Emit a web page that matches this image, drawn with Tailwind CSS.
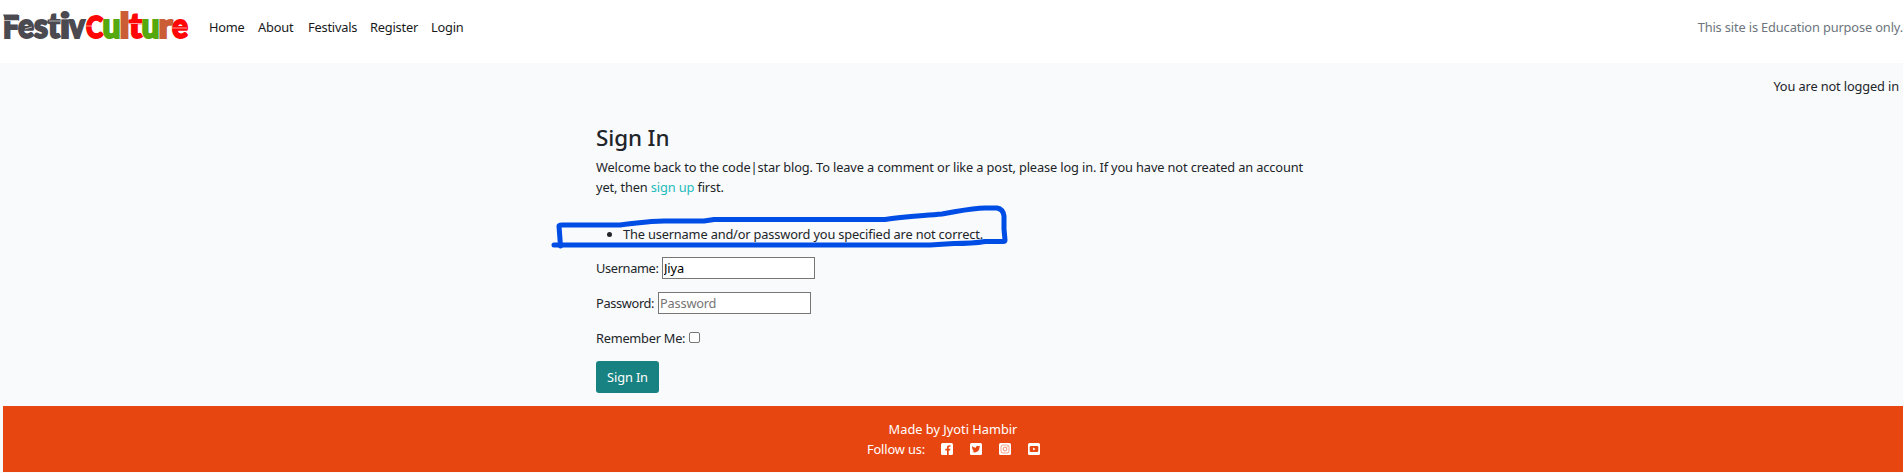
<!DOCTYPE html>
<html lang="en">
<head>
<meta charset="utf-8">
<title>FestivCulture</title>
<script src="https://cdn.jsdelivr.net/npm/@tailwindcss/browser@4"></script>
</head>
<body class="h-[473px] overflow-hidden bg-[#f9fafc] font-['Noto_Sans','Open_Sans',sans-serif] text-[12.8px] leading-5 tracking-[-0.13px] text-[#212529]">
<header class="flex h-[63px] items-start bg-white pt-[9px]">
  <a class="ml-[3px] block h-[36px] w-[186px] shrink-0">
    <svg class="block overflow-visible" width="186" height="36" viewBox="3 8 186 36" font-family="Lato, sans-serif" font-weight="900" font-size="34" letter-spacing="0" stroke-width="2">
      <g fill="#4b4a50" stroke="#4b4a50">
        <text x="3" y="37" font-size="31" textLength="16" lengthAdjust="spacingAndGlyphs">F</text>
        <text x="18" y="37" textLength="16" lengthAdjust="spacingAndGlyphs">e</text>
        <text x="34" y="37" textLength="14" lengthAdjust="spacingAndGlyphs">s</text>
        <text x="48" y="37" textLength="12" lengthAdjust="spacingAndGlyphs">t</text>
        <text x="60" y="37" textLength="10" lengthAdjust="spacingAndGlyphs">i</text>
        <text x="69" y="37" textLength="16" lengthAdjust="spacingAndGlyphs">v</text>
        <path d="M3 13.500H18L17 18H5Z" stroke="none"/>
      </g>
      <g fill="#ff0505" stroke="#ff0505">
        <text x="86" y="37" font-size="31" textLength="17" lengthAdjust="spacingAndGlyphs">C</text>
        <text x="129" y="37" textLength="13" lengthAdjust="spacingAndGlyphs">t</text>
        <text x="172" y="37" textLength="16" lengthAdjust="spacingAndGlyphs">e</text>
      </g>
      <g fill="#56a80f" stroke="#56a80f">
        <text x="102.500" y="37" textLength="18" lengthAdjust="spacingAndGlyphs">u</text>
        <text x="141.500" y="37" textLength="18" lengthAdjust="spacingAndGlyphs">u</text>
      </g>
      <g fill="#cb5d36" stroke="#cb5d36">
        <text x="119.500" y="37" textLength="10" lengthAdjust="spacingAndGlyphs">l</text>
        <text x="158.500" y="37" textLength="14" lengthAdjust="spacingAndGlyphs">r</text>
      </g>
      <path d="M4 19.500H18M49 20H60M61 18H69M86 25H97M129 22.500H142M25 28L32 26M172 27H187" fill="none" stroke="#fff" stroke-opacity=".75" stroke-width=".8"/>
    </svg>
  </a>
  <nav class="ml-[20px] mt-[8px] flex gap-[14px] tracking-[-0.2px] text-[#181a1c]">
    <a class="w-[35px] whitespace-nowrap">Home</a><a class="w-[36px] whitespace-nowrap">About</a><a class="w-[48px] whitespace-nowrap">Festivals</a><a class="w-[47px] whitespace-nowrap">Register</a><a class="whitespace-nowrap">Login</a>
  </nav>
  <span class="ml-auto mt-[8px] whitespace-nowrap text-[#6c757d]">This site is Education purpose only.</span>
</header>
<main>
  <p class="mt-[13px] h-5 pr-[4px] text-right">You are not logged in</p>
  <section class="ml-[596px] w-[720px] pt-[29px]">
    <h1 class="h-[26px] text-[22.4px] font-medium leading-[26px] tracking-[-0.1px]">Sign In</h1>
    <p class="mt-[6px] whitespace-nowrap">Welcome back to the code|star blog. To leave a comment or like a post, please log in. If you have not created an account<br>yet, then <a class="text-[#23bbbb]">sign up</a> first.</p>
    <div class="relative mt-[27px] h-5">
      <ul class="list-disc pl-[27px] tracking-[-0.16px]"><li>The username and/or password you specified are not correct.</li></ul>
      <svg class="absolute -left-[46px] -top-[24px]" width="460" height="56" viewBox="550 200 460 56" fill="none" stroke="#004de6" stroke-width="5" stroke-linecap="round" stroke-linejoin="round"><path d="M560.500 246L559 226Q559 225 562 225H620C640 223 647 221 664 221H704L714 219.500H885C902 217 920 216 942 214C965 210 973 208 985 208H997Q1003 209 1004 216V229L1005 240Q1005 241.500 1003 241.500H985C976 243 971 243.500 954 243.500L930 245H554"/></svg>
    </div>
    <form>
      <div class="mt-[13px] flex h-[22px] items-center"><label class="w-[66px] whitespace-nowrap tracking-[-0.35px]">Username:</label><input type="text" value="Jiya" class="h-[22px] w-[153px] border border-[#767676] bg-white px-px text-black"></div>
      <div class="mt-[13px] flex h-[22px] items-center"><label class="w-[62px] whitespace-nowrap tracking-[-0.35px]">Password:</label><input type="password" placeholder="Password" class="h-[22px] w-[153px] border border-[#767676] bg-white px-px tracking-[-0.2px] placeholder:text-[#757575]"></div>
      <div class="mt-[13px] flex h-[22px] items-center"><label class="w-[93px] whitespace-nowrap tracking-[-0.25px]">Remember Me:</label><input type="checkbox" class="-mt-px size-[11px] appearance-none rounded-[2px] border border-[#767676] bg-white"></div>
      <button type="button" class="mt-[12px] block h-[32px] w-[63px] rounded-[3px] bg-[#188181] text-center text-white">Sign In</button>
    </form>
  </section>
</main>
<footer class="ml-[3px] mt-[13px] h-[66px] bg-[#e84610] pt-[13px] text-center text-white">
  <p class="tracking-normal">Made by Jyoti Hambir</p>
  <div class="ml-[864px] flex h-5 items-center">
    <span class="w-[74px] whitespace-nowrap text-left">Follow us:</span>
    <span class="flex gap-[17px]">
    <svg width="12" height="12" viewBox="0 0 12 12"><rect width="12" height="12" rx="1.500" fill="#fff"/><path d="M6 12V7.500H4.300V5.800H6V4.500C6 2.800 7 2 9.500 2.300V3.800C8 3.700 7.700 4 7.700 4.800V5.800H9.400L9.100 7.500H7.700V12Z" fill="#e84610"/></svg>
    <svg width="12" height="12" viewBox="0 0 12 12"><rect width="12" height="12" rx="1.500" fill="#fff"/><path d="M2.300 3C3.200 4.100 4.500 4.700 6 4.700C5.700 2.800 7.900 2 9 3.200L10 2.800L9.600 3.600L10.200 3.600L9.500 4.300C9.600 8.800 5.300 10.500 2 8.700C2.900 8.800 3.700 8.500 4.300 8.100C3.500 8 3 7.500 2.800 6.900H3.400C2.600 6.600 2.100 6 2.100 5.200L2.800 5.400C2.100 4.800 1.900 3.900 2.300 3Z" fill="#e84610"/></svg>
    <svg width="12" height="12" viewBox="0 0 12 12" fill="none" stroke="#e84610"><rect width="12" height="12" rx="1.500" fill="#fff" stroke="none"/><rect x="2" y="2" width="8" height="8" rx="2" stroke-width=".5"/><circle cx="6" cy="6" r="1.900" stroke-width=".6"/><circle cx="8.300" cy="3.700" r=".3" stroke-width=".3"/></svg>
    <svg width="12" height="12" viewBox="0 0 12 12"><rect width="12" height="12" rx="1.500" fill="#fff"/><rect x="1.700" y="3" width="8.600" height="6" rx="1.300" fill="#e84610"/><path d="M5.100 4.600V7.400L7.500 6Z" fill="#fff"/></svg>
    </span>
  </div>
</footer>
</body>
</html>
